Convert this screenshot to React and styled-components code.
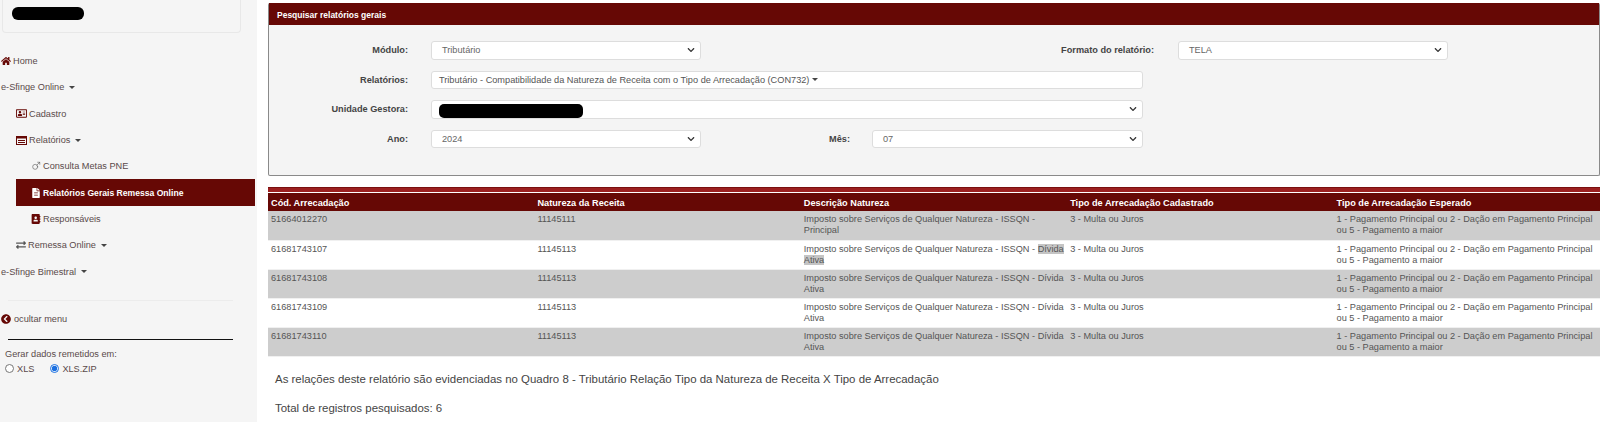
import React from 'react';
import styled, { createGlobalStyle } from 'styled-components';
import { FaHome, FaRegAddressCard, FaFileAlt, FaAddressBook, FaExchangeAlt, FaChevronCircleLeft, FaChevronDown } from 'react-icons/fa';
import { Mars } from 'lucide-react';

const Global = createGlobalStyle`
  html, body { margin: 0; padding: 0; background: #fff; }
  body { font-family: "Liberation Sans", Arial, sans-serif; font-size: 9px; color: #555; height: 422px; overflow: hidden; }
  * { box-sizing: border-box; }
`;

const MAROON = '#660805';

const Page = styled.div`
  display: flex;
  width: 1600px;
  height: 422px;
  overflow: hidden;
`;
const Sidebar = styled.aside`
  width: 257px;
  flex: none;
  background: #f5f5f5;
  display: flex;
  flex-direction: column;
  color: #5a4a4a;
`;
const UserCard = styled.div`
  width: 239px;
  height: 33px;
  margin-left: 2px;
  border: 1px solid #e8e8e8;
  border-top: 0;
  border-radius: 0 0 4px 4px;
  padding: 7px 0 0 9px;
`;
const Redact = styled.div`
  width: ${p => p.$w}px;
  height: ${p => p.$h}px;
  background: #000;
  border-radius: ${p => p.$r}px;
`;
const FieldRedact = styled(Redact)`
  margin: 3px 0 0 -3px;
`;
const Nav = styled.nav`
  display: flex;
  flex-direction: column;
  margin-top: 15px;
`;
const NavItem = styled.div`
  height: 26.3px;
  display: flex;
  align-items: center;
  gap: 2px;
  padding-left: ${p => p.$indent}px;
  margin-left: ${p => (p.$active ? 16 : 0)}px;
  margin-right: ${p => (p.$active ? 2 : 0)}px;
  background: ${p => (p.$active ? MAROON : 'transparent')};
  color: ${p => (p.$active ? '#fff' : 'inherit')};
  font-weight: ${p => (p.$active ? 700 : 400)};
  font-size: ${p => (p.$active ? 8.6 : 9.2)}px;
  svg.icon { color: ${p => (p.$active ? '#fff' : MAROON)}; font-size: 10px; flex: none; }
  svg.wide { font-size: 11px; }
  svg.muted { color: #555; }
`;
const Caret = styled.span`
  display: inline-block;
  margin-left: 3px;
  width: 0;
  height: 0;
  border-left: 3px solid transparent;
  border-right: 3px solid transparent;
  border-top: 3px solid #444;
`;
const Rule = styled.hr`
  margin: ${p => p.$m};
  width: 225px;
  border: 0;
  border-top: ${p => p.$t};
`;
const HideMenu = styled.div`
  display: flex;
  align-items: center;
  gap: 3px;
  padding-left: 1px;
  margin-top: 11px;
  height: 14px;
  font-size: 9.2px;
  svg { color: ${MAROON}; font-size: 10px; }
`;
const ExportBox = styled.div`
  padding-left: 5px;
  margin-top: 8px;
  font-size: 9.2px;
  line-height: 12px;
`;
const RadioRow = styled.div`
  display: flex;
  gap: 16px;
  margin-top: 3px;
`;
const RadioLabel = styled.label`
  display: flex;
  align-items: center;
  gap: 3px;
`;
const Radio = styled.input`
  margin: 0;
  width: 9px;
  height: 9px;
  accent-color: #1a6fe0;
`;
const Main = styled.main`
  margin-left: 11px;
  flex: 1;
  min-width: 0;
  padding-top: 3px;
`;
const Panel = styled.section`
  height: 173px;
  border: 1px solid #8a8a8a;
  border-top: 0;
  border-radius: 2px;
  background: #f4f4f4;
`;
const PanelHead = styled.h2`
  margin: 0;
  height: 22px;
  background: ${MAROON};
  color: #fff;
  font-size: 8.5px;
  font-weight: 700;
  line-height: 24px;
  padding-left: 8px;
`;
const Form = styled.div`
  padding-top: 16px;
  display: grid;
  grid-template-columns: 139px 23px 270px 149px 22px 271px 11px 24px 270px;
  grid-auto-rows: 18.5px;
  row-gap: 11px;
  align-items: center;
`;
const Label = styled.label`
  grid-column: ${p => p.$col};
  text-align: right;
  font-weight: 700;
  color: #444;
  font-size: 9.2px;
  white-space: nowrap;
`;
const Select = styled.div`
  grid-column: ${p => p.$col};
  height: 18.5px;
  display: flex;
  align-items: center;
  justify-content: space-between;
  background: #fff;
  border: 1px solid #ddd;
  border-radius: 3px;
  padding: 0 5px 0 10px;
  color: #666;
  font-size: 9.2px;
  svg { color: #333; font-size: 8px; }
`;
const TextField = styled(Select)`
  padding-left: 7px;
  color: #555;
  justify-content: flex-start;
  gap: 0;
`;
const TableTop = styled.div`
  margin-top: 11px;
  height: 6px;
  background: #9c2020;
  border-top: 1px solid #7a1010;
  border-bottom: 1px solid #fff;
`;
const Table = styled.table`
  width: 100%;
  border-collapse: collapse;
  table-layout: fixed;
`;
const Th = styled.th`
  background: ${MAROON};
  color: #fff;
  font-size: 9.2px;
  font-weight: 700;
  text-align: left;
  height: 18px;
  padding: 1px 3px 0;
`;
const Row = styled.tr`
  background: ${p => (p.$odd ? '#cdcdcd' : '#fff')};
  height: 29px;
`;
const Td = styled.td`
  vertical-align: top;
  padding: 3px 3px 3px;
  font-size: 9.2px;
  line-height: 11px;
  color: #555;
  border-bottom: 1px solid #f0f0f0;
`;
const Mark = styled.span`
  background: #c4c4c4;
`;
const Note = styled.p`
  margin: ${p => p.$m};
  padding-left: 7px;
  font-size: 11.45px;
  line-height: 14px;
  color: #444;
`;

const ListIcon = () => (
  <svg className="icon wide" width="11" height="9" viewBox="0 0 11 9" fill="none">
    <rect x="0.5" y="0.5" width="10" height="8" stroke="currentColor" />
    <rect x="0.5" y="0.5" width="10" height="2" fill="currentColor" />
    <path d="M2 4.5h7M2 6.5h7" stroke="currentColor" />
  </svg>
);

const rows = [
  ['51664012270', '11145111', 'Principal'],
  ['61681743107', '11145113', 'Dívida Ativa', true],
  ['61681743108', '11145113', 'Dívida Ativa'],
  ['61681743109', '11145113', 'Dívida Ativa'],
  ['61681743110', '11145113', 'Dívida Ativa'],
];

export default function App() {
  return (
    <Page>
      <Global />
      <Sidebar>
        <UserCard><Redact $w={72} $h={13} $r={6} /></UserCard>
        <Nav>
          <NavItem $indent={1}><FaHome className="icon" />Home</NavItem>
          <NavItem $indent={1}>e-Sfinge Online<Caret /></NavItem>
          <NavItem $indent={16}><FaRegAddressCard className="icon wide" />Cadastro</NavItem>
          <NavItem $indent={16}><ListIcon />Relatórios<Caret /></NavItem>
          <NavItem $indent={31}><Mars className="icon muted" size={10} strokeWidth={1.4} />Consulta Metas PNE</NavItem>
          <NavItem $indent={15} $active><FaFileAlt className="icon" />Relatórios Gerais Remessa Online</NavItem>
          <NavItem $indent={31}><FaAddressBook className="icon" />Responsáveis</NavItem>
          <NavItem $indent={16}><FaExchangeAlt className="icon muted" />Remessa Online<Caret /></NavItem>
          <NavItem $indent={1}>e-Sfinge Bimestral<Caret /></NavItem>
        </Nav>
        <Rule $m="15px 0 0 8px" $t="1px solid #ececec" />
        <HideMenu><FaChevronCircleLeft />ocultar menu</HideMenu>
        <Rule $m="13px 0 0 8px" $t="1px solid #111" />
        <ExportBox>
          Gerar dados remetidos em:
          <RadioRow>
            <RadioLabel><Radio type="radio" name="fmt" />XLS</RadioLabel>
            <RadioLabel><Radio type="radio" name="fmt" defaultChecked />XLS.ZIP</RadioLabel>
          </RadioRow>
        </ExportBox>
      </Sidebar>
      <Main>
        <Panel>
          <PanelHead>Pesquisar relatórios gerais</PanelHead>
          <Form>
            <Label $col="1">Módulo:</Label>
            <Select $col="3">Tributário<FaChevronDown /></Select>
            <Label $col="4 / 8">Formato do relatório:</Label>
            <Select $col="9">TELA<FaChevronDown /></Select>
            <Label $col="1">Relatórios:</Label>
            <TextField $col="3 / 7">Tributário - Compatibilidade da Natureza de Receita com o Tipo de Arrecadação (CON732)<Caret /></TextField>
            <Label $col="1">Unidade Gestora:</Label>
            <Select $col="3 / 7"><FieldRedact $w={144} $h={14} $r={5} /><FaChevronDown /></Select>
            <Label $col="1">Ano:</Label>
            <Select $col="3">2024<FaChevronDown /></Select>
            <Label $col="4">Mês:</Label>
            <Select $col="6">07<FaChevronDown /></Select>
          </Form>
        </Panel>
        <TableTop />
        <Table>
          <thead>
            <tr>
              <Th>Cód. Arrecadação</Th>
              <Th>Natureza da Receita</Th>
              <Th>Descrição Natureza</Th>
              <Th>Tipo de Arrecadação Cadastrado</Th>
              <Th>Tipo de Arrecadação Esperado</Th>
            </tr>
          </thead>
          <tbody>
            {rows.map((r, i) => (
              <Row key={r[0]} $odd={i % 2 === 0}>
                <Td>{r[0]}</Td>
                <Td>{r[1]}</Td>
                <Td>Imposto sobre Serviços de Qualquer Natureza - ISSQN - {r[3] ? <Mark>{r[2]}</Mark> : r[2]}</Td>
                <Td>3 - Multa ou Juros</Td>
                <Td>1 - Pagamento Principal ou 2 - Dação em Pagamento Principal ou 5 - Pagamento a maior</Td>
              </Row>
            ))}
          </tbody>
        </Table>
        <Note $m="15px 0 0">As relações deste relatório são evidenciadas no Quadro 8 - Tributário Relação Tipo da Natureza de Receita X Tipo de Arrecadação</Note>
        <Note $m="15px 0 0">Total de registros pesquisados: 6</Note>
      </Main>
    </Page>
  );
}
